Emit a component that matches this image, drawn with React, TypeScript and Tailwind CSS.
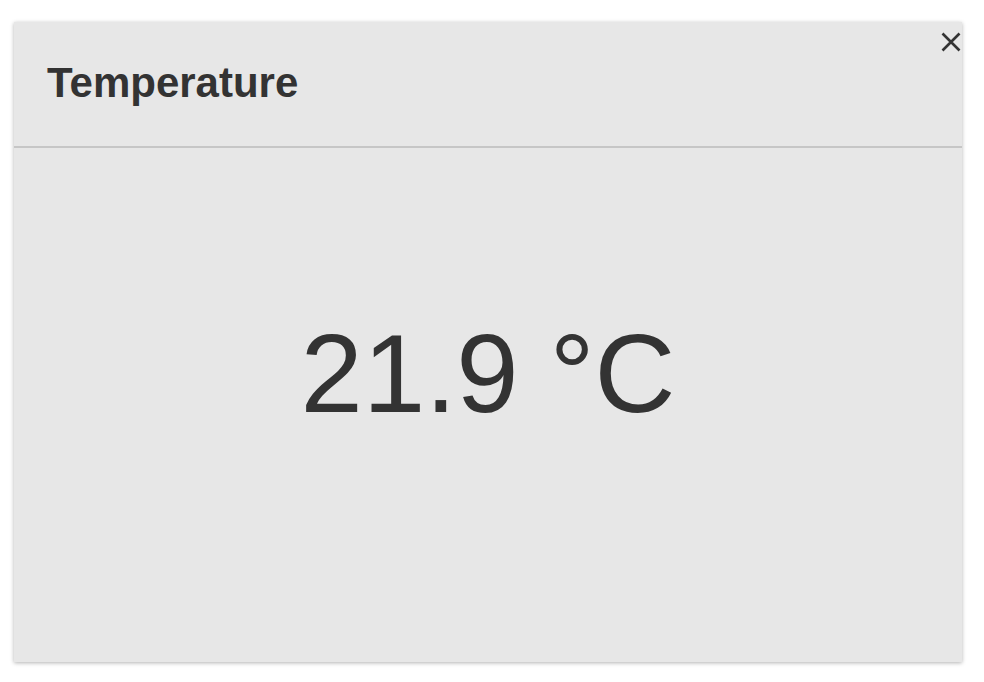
export default function App() {
  return (
    <div className="min-h-screen bg-white pl-[14px] pt-[22px]" style={{ fontFamily: '"Liberation Sans", Arial, sans-serif' }}>
      <Card title="Temperature" value="21.9 °C" />
    </div>
  );
}

function Card({ title, value }: { title: string; value: string }) {
  return (
    <div className="relative w-[948px] h-[640px] bg-[#e7e7e7] shadow-[0_1px_4px_rgba(0,0,0,0.3)]">
      <button className="absolute right-[1px] top-[10px] block text-[#333]" aria-label="close">
        <svg width="20" height="20" viewBox="0 0 20 20" className="block">
          <path d="M1.5 1.5 L18.5 18.5 M18.5 1.5 L1.5 18.5" stroke="currentColor" strokeWidth="2.6" fill="none" />
        </svg>
      </button>
      <div className="h-[126px] flex items-center pl-[33px] pb-[3px] border-b-2 border-[#c6c6c6]">
        <h2 className="text-[42px] font-bold text-[#333]">{title}</h2>
      </div>
      <div className="pt-[170px] text-center text-[112px] leading-none text-[#333]">{value}</div>
    </div>
  );
}
